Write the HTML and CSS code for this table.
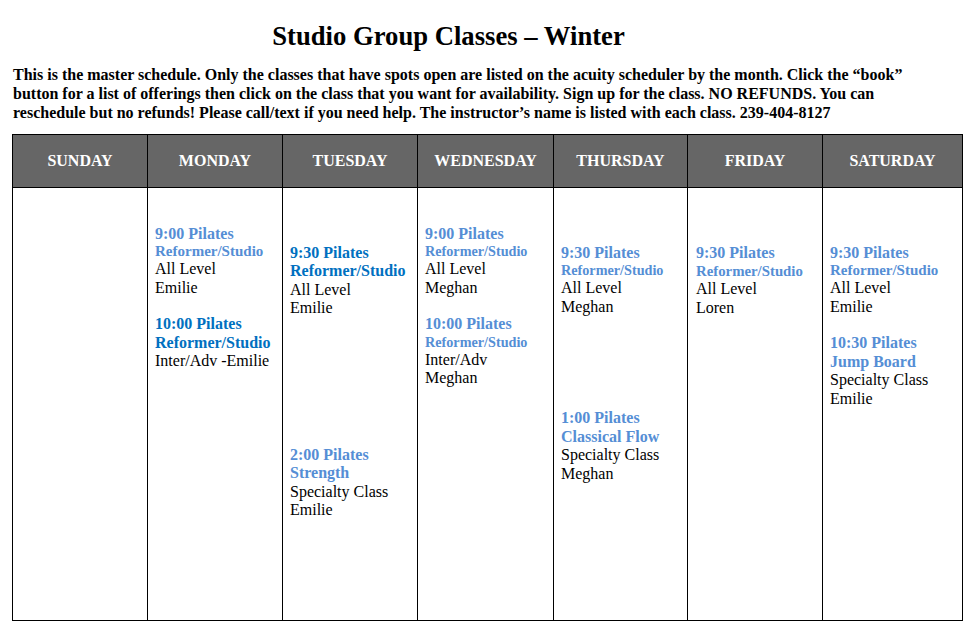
FILE: index.html
```html
<!DOCTYPE html>
<html lang="en">
<head>
<meta charset="utf-8">
<title>Studio Group Classes – Winter</title>
<link rel="stylesheet" href="styles.css">
</head>
<body>
<div class="page">
  <h1 class="title">Studio Group Classes – Winter</h1>
  <p class="intro">This is the master schedule. Only the classes that have spots open are listed on the acuity scheduler by the month. Click the “book”<br>button for a list of offerings then click on the class that you want for availability. Sign up for the class. NO REFUNDS. You can<br>reschedule but no refunds! Please call/text if you need help. The instructor’s name is listed with each class. 239-404-8127</p>
  <table class="schedule">
    <colgroup>
      <col class="c1"><col class="c2"><col class="c3"><col class="c4"><col class="c5"><col class="c6"><col class="c7">
    </colgroup>
    <thead>
      <tr>
        <th>SUNDAY</th><th>MONDAY</th><th>TUESDAY</th><th>WEDNESDAY</th><th>THURSDAY</th><th>FRIDAY</th><th>SATURDAY</th>
      </tr>
    </thead>
    <tbody>
      <tr>
        <td></td>
        <td>
          <div class="cell early">
            <div class="cls light">
              <div class="t">9:00 Pilates</div>
              <div class="t sm">Reformer/Studio</div>
              <div>All Level</div>
              <div>Emilie</div>
            </div>
            <div class="cls dark gap1">
              <div class="t">10:00 Pilates</div>
              <div class="t">Reformer/Studio</div>
              <div>Inter/Adv -Emilie</div>
            </div>
          </div>
        </td>
        <td>
          <div class="cell late">
            <div class="cls dark">
              <div class="t">9:30 Pilates</div>
              <div class="t">Reformer/Studio</div>
              <div>All Level</div>
              <div>Emilie</div>
            </div>
            <div class="cls light gap-tue">
              <div class="t">2:00 Pilates</div>
              <div class="t">Strength</div>
              <div>Specialty Class</div>
              <div>Emilie</div>
            </div>
          </div>
        </td>
        <td>
          <div class="cell early">
            <div class="cls light">
              <div class="t">9:00 Pilates</div>
              <div class="t xs">Reformer/Studio</div>
              <div>All Level</div>
              <div>Meghan</div>
            </div>
            <div class="cls light gap1">
              <div class="t">10:00 Pilates</div>
              <div class="t xs">Reformer/Studio</div>
              <div>Inter/Adv</div>
              <div>Meghan</div>
            </div>
          </div>
        </td>
        <td>
          <div class="cell late">
            <div class="cls light">
              <div class="t">9:30 Pilates</div>
              <div class="t xs">Reformer/Studio</div>
              <div>All Level</div>
              <div>Meghan</div>
            </div>
            <div class="cls light gap-thu">
              <div class="t">1:00 Pilates</div>
              <div class="t">Classical Flow</div>
              <div>Specialty Class</div>
              <div>Meghan</div>
            </div>
          </div>
        </td>
        <td>
          <div class="cell late fri">
            <div class="cls light">
              <div class="t">9:30 Pilates</div>
              <div class="t md">Reformer/Studio</div>
              <div>All Level</div>
              <div>Loren</div>
            </div>
          </div>
        </td>
        <td>
          <div class="cell late">
            <div class="cls light">
              <div class="t">9:30 Pilates</div>
              <div class="t sm">Reformer/Studio</div>
              <div>All Level</div>
              <div>Emilie</div>
            </div>
            <div class="cls light gap1">
              <div class="t">10:30 Pilates</div>
              <div class="t">Jump Board</div>
              <div>Specialty Class</div>
              <div>Emilie</div>
            </div>
          </div>
        </td>
      </tr>
    </tbody>
  </table>
</div>
</body>
</html>
```

FILE: styles.css
```css
html, body {
  margin: 0;
  padding: 0;
  background: #ffffff;
}

body {
  font-family: "Liberation Serif", "Times New Roman", serif;
  color: #000000;
}

.page {
  padding: 21px 14px 0 12px;
}

.title {
  margin: 0;
  padding-right: 77px;
  text-align: center;
  font-size: 26.67px;
  line-height: 30.67px;
  font-weight: bold;
}

.intro {
  margin: 13px 0 0 1px;
  font-size: 16px;
  line-height: 19px;
  font-weight: bold;
  white-space: nowrap;
}

.schedule {
  margin-top: 12px;
  border-collapse: collapse;
  table-layout: fixed;
  width: 951px;
}

.c1, .c2, .c3 { width: 135px; }
.c4 { width: 136px; }
.c5 { width: 134px; }
.c6 { width: 135px; }
.c7 { width: 140px; }

.schedule th,
.schedule td {
  border: 1px solid #000000;
  padding: 0;
}

.schedule th {
  height: 52px;
  background: #666666;
  color: #ffffff;
  font-size: 16px;
  font-weight: bold;
  text-align: center;
  vertical-align: middle;
}

.schedule td {
  height: 432px;
  vertical-align: top;
}

.cell {
  display: flex;
  flex-direction: column;
  padding-left: 7px;
  font-size: 16px;
  line-height: 18.5px;
}

.cell.early { padding-top: 37px; }
.cell.late { padding-top: 56px; }
.cell.fri { padding-left: 8px; }

.cls .t { font-weight: bold; }
.cls.light .t { color: #558ed5; }
.cls.dark .t { color: #0070c0; }

.t.sm { font-size: 15px; line-height: 17px; }
.t.md { font-size: 14.8px; line-height: 18px; }
.t.xs { font-size: 14.2px; line-height: 17px; }

.gap1 { margin-top: 18px; }
.gap-tue { margin-top: 128px; }
.gap-thu { margin-top: 93px; }
```
